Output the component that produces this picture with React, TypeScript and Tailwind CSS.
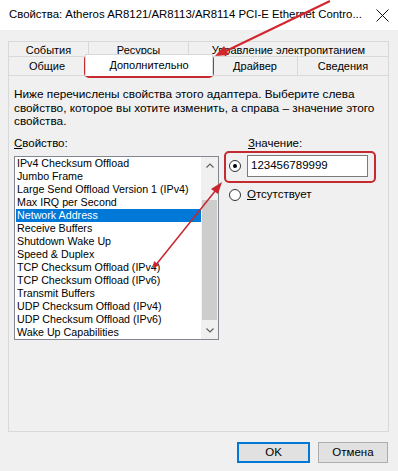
import React from 'react';

const properties = [
  'IPv4 Checksum Offload',
  'Jumbo Frame',
  'Large Send Offload Version 1 (IPv4)',
  'Max IRQ per Second',
  'Network Address',
  'Receive Buffers',
  'Shutdown Wake Up',
  'Speed & Duplex',
  'TCP Checksum Offload (IPv4)',
  'TCP Checksum Offload (IPv6)',
  'Transmit Buffers',
  'UDP Checksum Offload (IPv4)',
  'UDP Checksum Offload (IPv6)',
  'Wake Up Capabilities',
];

const Radio: React.FC<{ checked?: boolean }> = ({ checked }) => (
  <span className="flex h-[12px] w-[12px] shrink-0 items-center justify-center rounded-full border border-[#333] bg-white">
    {checked && <span className="h-[4px] w-[4px] rounded-full bg-black" />}
  </span>
);

const Chevron: React.FC<{ down?: boolean }> = ({ down }) => (
  <svg width="8" height="5" viewBox="0 0 8 5" className={down ? 'rotate-180' : ''}>
    <polyline points="0.5,4.5 4,1 7.5,4.5" fill="none" stroke="#606060" strokeWidth="1.2" />
  </svg>
);

export default function App() {
  return (
    <div className="relative h-[471px] w-[398px] overflow-hidden bg-[#f0f0f0] font-['Liberation_Sans',Arial,sans-serif] text-[11px] text-black">
      {/* title bar */}
      <div className="flex h-[30px] items-center justify-between bg-white pl-[9px] pr-[9px]">
        <span className="text-[11.4px] leading-none">Свойства: Atheros AR8121/AR8113/AR8114 PCI-E Ethernet Contro...</span>
        <svg width="13" height="13" viewBox="0 0 13 13">
          <path d="M0.5 0.5 L12.5 12.5 M12.5 0.5 L0.5 12.5" stroke="#111" strokeWidth="1" />
        </svg>
      </div>

      {/* tabs */}
      <div className="mx-[8px] mt-[11px] w-[381px]">
        <div className="flex h-[15px] leading-[16px]">
          <div className="w-[80px] border-l border-t border-[#d9d9d9] text-center">События</div>
          <div className="w-[100px] border-l border-t border-[#d9d9d9] text-center">Ресурсы</div>
          <div className="flex-1 border-l border-r border-t border-[#d9d9d9] text-center">Управление электропитанием</div>
        </div>
        <div className="relative z-10 flex h-[19px] items-end">
          <div className="h-[19px] w-[77px] border-l border-t border-[#d9d9d9] text-center leading-[18px]">Общие</div>
          <div className="-mb-[1px] h-[22px] w-[128px] border-l border-r border-t border-[#d9d9d9] bg-white text-center leading-[20px]">Дополнительно</div>
          <div className="h-[19px] w-[84px] border-t border-[#d9d9d9] text-center leading-[18px]">Драйвер</div>
          <div className="h-[19px] flex-1 border-l border-r border-t border-[#d9d9d9] text-center leading-[18px]">Сведения</div>
        </div>

        {/* panel */}
        <div className="h-[357px] border border-[#d9d9d9] bg-[#f0f0f0] px-[5px] pt-[12px]">
          <p className="text-[11.8px] leading-[13.5px]">
            Ниже перечислены свойства этого адаптера. Выберите слева
            <br />
            свойство, которое вы хотите изменить, а справа – значение этого
            <br />
            свойства.
          </p>

          <div className="mt-[8px] flex text-[11.5px] leading-[13.5px]">
            <div className="w-[234px]">
              <span className="underline">С</span>войство:
            </div>
            <div>
              <span className="underline">З</span>начение:
            </div>
          </div>

          <div className="mt-[6px] flex items-start">
            {/* list box */}
            <div className="flex h-[184px] w-[205px] border border-[#828790] bg-white text-[10.7px]">
              <div className="flex-1 pl-[1px]">
                {properties.map((p) => (
                  <div
                    key={p}
                    className={
                      p === 'Network Address'
                        ? 'h-[13px] bg-[#0078d7] pl-[1px] leading-[13px] text-white'
                        : 'h-[13px] pl-[1px] leading-[13px]'
                    }
                  >
                    {p}
                  </div>
                ))}
              </div>
              <div className="flex w-[17px] flex-col bg-[#f0f0f0]">
                <div className="flex h-[17px] items-center justify-center">
                  <Chevron />
                </div>
                <div className="h-[26px]" />
                <div className="mx-[1px] h-[120px] bg-[#cdcdcd]" />
                <div className="flex-1" />
                <div className="flex h-[17px] items-center justify-center">
                  <Chevron down />
                </div>
              </div>
            </div>

            {/* value column */}
            <div className="-mt-[1px] ml-[10px] flex flex-col">
              <div className="flex h-[22px] items-center gap-[6px]">
                <Radio checked />
                <div className="flex h-[22px] w-[121px] items-center border border-[#7a7a7a] bg-white pl-[3px] text-[11.5px]">
                  123456789999
                </div>
              </div>
              <div className="mt-[11px] flex h-[14px] items-center gap-[6px]">
                <Radio />
                <span className="text-[11.5px]">
                  <span className="underline">О</span>тсутствует
                </span>
              </div>
            </div>
          </div>
        </div>

        {/* buttons */}
        <div className="mt-[10px] flex justify-end gap-[8px] pr-[1px] text-[11.5px]">
          <button className="h-[21px] w-[73px] border-2 border-[#0078d7] bg-[#e1e1e1]">OK</button>
          <button className="h-[21px] w-[70px] border border-[#adadad] bg-[#e1e1e1]">Отмена</button>
        </div>
      </div>

      {/* annotations */}
      <div className="pointer-events-none absolute left-[84px] top-[54px] h-[24px] w-[130px] rounded-[5px] border-2 border-[#c42a30]" />
      <div className="pointer-events-none absolute left-[224px] top-[151px] h-[32px] w-[152px] rounded-[5px] border-2 border-[#c42a30]" />
      <svg className="pointer-events-none absolute left-0 top-0" width="398" height="471" viewBox="0 0 398 471">
        <line x1="330" y1="1" x2="226" y2="51" stroke="#d3262c" strokeWidth="2" />
        <polygon points="215,56 224,46 229,55" fill="#d3262c" />
        <line x1="155" y1="266" x2="216" y2="190" stroke="#c8262c" strokeWidth="1.5" />
        <polygon points="222,182 211,189 218,194" fill="#c8262c" />
        <polygon points="153,269 154,261 159,265" fill="#c8262c" />
      </svg>
    </div>
  );
}
